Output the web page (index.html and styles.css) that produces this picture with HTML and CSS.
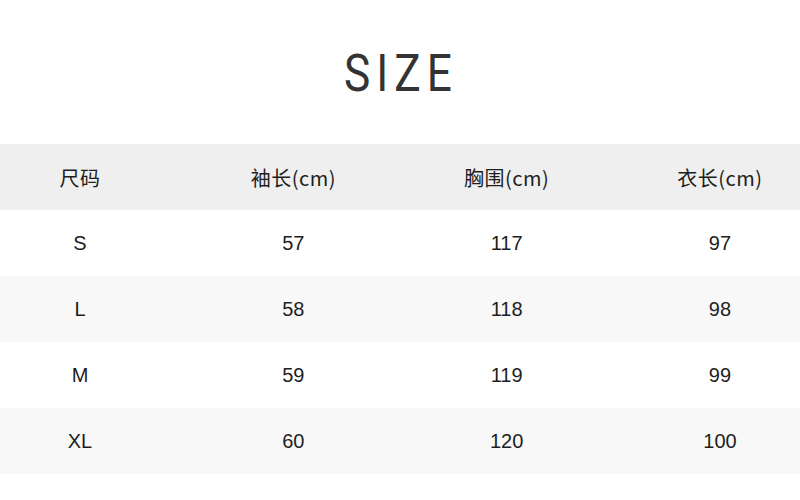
FILE: index.html
```html
<!DOCTYPE html>
<html lang="zh">
<head>
<meta charset="utf-8">
<title>SIZE</title>
<link rel="stylesheet" href="styles.css">
</head>
<body>
<div class="page">
  <div class="title-wrap"><h1 class="title">SIZE</h1></div>
  <div class="table">
    <div class="row head">
      <div class="cell">尺码</div>
      <div class="cell">袖长(cm)</div>
      <div class="cell">胸围(cm)</div>
      <div class="cell">衣长(cm)</div>
    </div>
    <div class="row">
      <div class="cell">S</div>
      <div class="cell">57</div>
      <div class="cell">117</div>
      <div class="cell">97</div>
    </div>
    <div class="row alt">
      <div class="cell">L</div>
      <div class="cell">58</div>
      <div class="cell">118</div>
      <div class="cell">98</div>
    </div>
    <div class="row">
      <div class="cell">M</div>
      <div class="cell">59</div>
      <div class="cell">119</div>
      <div class="cell">99</div>
    </div>
    <div class="row alt">
      <div class="cell">XL</div>
      <div class="cell">60</div>
      <div class="cell">120</div>
      <div class="cell">100</div>
    </div>
  </div>
</div>
</body>
</html>
```

FILE: styles.css
```css
html, body {
  margin: 0;
  padding: 0;
  background: #ffffff;
}
.page {
  width: 800px;
  height: 500px;
  font-family: "Liberation Sans", "Noto Sans CJK SC", sans-serif;
  color: #1e1e1e;
}
.title-wrap {
  height: 144px;
  display: flex;
  align-items: center;
  justify-content: center;
}
.title {
  margin: 0 0 0 2px;
  font-family: Roboto, sans-serif;
  font-weight: 400;
  font-size: 52px;
  line-height: 1;
  letter-spacing: 7px;
  color: #333333;
  transform: scaleX(0.85);
  position: relative;
  top: 2px;
}
.row {
  display: grid;
  grid-template-columns: repeat(4, 160px);
  column-gap: 53.33px;
  height: 66px;
  align-items: center;
}
.row.head {
  background: #efefef;
}
.row.head .cell {
  font-family: "Noto Sans CJK SC", sans-serif;
  font-size: 20px;
  letter-spacing: 0.5px;
}
.row.alt {
  background: #f8f8f8;
}
.cell {
  text-align: center;
  font-size: 20px;
}
```
